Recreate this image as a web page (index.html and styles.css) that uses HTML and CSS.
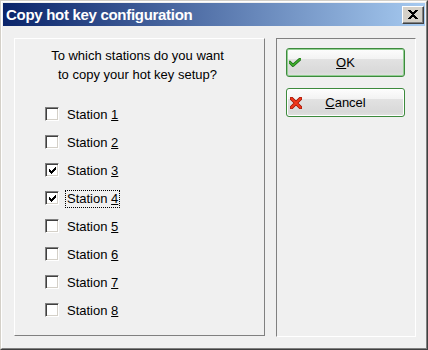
FILE: index.html
```html
<!DOCTYPE html>
<html lang="en">
<head>
  <meta charset="UTF-8">
  <title>Copy hot key configuration</title>
  <link rel="stylesheet" href="styles.css">
</head>
<body>
  <div class="window">
    <div class="frame">
      <div class="titlebar">
        <span class="title">Copy hot key configuration</span>
        <button class="close-btn" aria-label="Close">
          <svg width="10" height="9" viewBox="0 0 10 9" shape-rendering="crispEdges">
            <path d="M0 0h2.6l2.4 2.9L7.4 0H10L6.3 4.5 10 9H7.4L5 6.1 2.6 9H0l3.7-4.5z" fill="#000"/>
          </svg>
        </button>
      </div>

      <div class="content">
        <div class="group group-left">
          <p class="question">To which stations do you want<br>to copy your hot key setup?</p>
          <ul class="station-list" id="station-list"></ul>
        </div>

        <div class="group group-right">
          <button class="dlg-btn default">
            <svg class="btn-icon" width="12" height="9" viewBox="0 0 12 9">
              <path d="M0.8 4.2 L4 7.4 L11.2 1" fill="none" stroke="#1d6a1d" stroke-width="3" stroke-linejoin="round" stroke-linecap="round"/>
              <path d="M0.8 4.2 L4 7.4 L11.2 1" fill="none" stroke="#3fae2a" stroke-width="1.6" stroke-linejoin="round" stroke-linecap="round"/>
            </svg>
            <span><u>O</u>K</span>
          </button>
          <button class="dlg-btn">
            <svg class="btn-icon cross" width="12" height="12" viewBox="0 0 12 12">
              <path d="M1.5 1.5 L10.5 10.5 M10.5 1.5 L1.5 10.5" stroke="#a01000" stroke-width="3.6" stroke-linecap="round"/>
              <path d="M1.5 1.5 L10.5 10.5 M10.5 1.5 L1.5 10.5" stroke="#f0391c" stroke-width="2" stroke-linecap="round"/>
            </svg>
            <span><u>C</u>ancel</span>
          </button>
        </div>
      </div>
    </div>
  </div>

  <script>
    const stations = [
      { num: 1, checked: false },
      { num: 2, checked: false },
      { num: 3, checked: true },
      { num: 4, checked: true, focused: true },
      { num: 5, checked: false },
      { num: 6, checked: false },
      { num: 7, checked: false },
      { num: 8, checked: false }
    ];

    const checkSvg = `
      <svg width="7" height="7" viewBox="0 0 7 7" shape-rendering="crispEdges">
        <path d="M0 2h1v1h1v1h1V3h1V2h1V1h1V0h1v3H6v1H5v1H4v1H3v1H2V6H1V5H0z" fill="#000"/>
      </svg>`;

    function renderStations() {
      const list = document.getElementById("station-list");
      list.innerHTML = "";

      stations.forEach(st => {
        const li = document.createElement("li");
        li.className = "station";
        li.innerHTML = `
          <span class="checkbox">${st.checked ? checkSvg : ""}</span>
          <span class="station-label${st.focused ? " focused" : ""}">Station <u>${st.num}</u></span>
        `;
        li.addEventListener("click", () => {
          st.checked = !st.checked;
          renderStations();
        });
        list.appendChild(li);
      });
    }

    renderStations();
  </script>
</body>
</html>
```

FILE: styles.css
```css
body {
  margin: 0;
  padding: 0;
  background-color: #f0f0f0;
  font-family: "Liberation Sans", Arial, sans-serif;
  font-size: 13px;
  color: #000;
}

.window {
  width: 428px;
  height: 350px;
  box-sizing: border-box;
  border: 1px solid;
  border-color: #d4d0c8 #404040 #404040 #d4d0c8;
}

.frame {
  height: 100%;
  box-sizing: border-box;
  border: 1px solid;
  border-color: #fff #808080 #808080 #fff;
  padding: 1px;
  background-color: #f0f0f0;
}

.titlebar {
  height: 23px;
  display: flex;
  align-items: center;
  justify-content: space-between;
  padding: 0 1px 0 3px;
  background: linear-gradient(to right, #0a246a, #a6caf0);
}

.title {
  color: #fff;
  font-weight: bold;
  font-size: 15px;
  letter-spacing: -0.3px;
}

.close-btn {
  width: 22px;
  height: 18px;
  padding: 0;
  display: flex;
  align-items: center;
  justify-content: center;
  background-color: #d4d0c8;
  border: 1px solid;
  border-color: #fff #404040 #404040 #fff;
  box-shadow: inset -1px -1px #808080;
}

.content {
  display: flex;
  gap: 11px;
  padding: 12px 9px 0 11px;
}

.group {
  box-sizing: border-box;
  border: 1px solid;
}

.group-left {
  width: 251px;
  height: 298px;
  border-color: #fff #808080 #808080 #fff;
  padding: 7px 0 0 30px;
}

.group-right {
  width: 140px;
  height: 299px;
  border-color: #808080 #fff #fff #808080;
  padding: 9px 0 0 9px;
  display: flex;
  flex-direction: column;
  gap: 11px;
}

.question {
  margin: 0 0 0 -30px;
  line-height: 19px;
  text-align: center;
  padding-right: 4px;
}

.station-list {
  list-style: none;
  margin: 22px 0 0 0;
  padding: 0;
  display: flex;
  flex-direction: column;
  gap: 10px;
}

.station {
  display: flex;
  align-items: flex-start;
  gap: 6px;
  height: 18px;
  cursor: default;
}

.checkbox {
  width: 14px;
  height: 14px;
  margin-top: 1px;
  box-sizing: border-box;
  border: 1px solid;
  border-color: #808080 #fff #fff #808080;
  box-shadow: inset 1px 1px #404040, inset -1px -1px #d4d0c8;
  background-color: #fff;
  display: flex;
  align-items: center;
  justify-content: center;
}

.station-label {
  line-height: 16px;
  padding: 0 1px;
  border: 1px dotted transparent;
}

.station-label.focused {
  border-color: #000;
}

.dlg-btn {
  position: relative;
  width: 119px;
  height: 29px;
  padding: 0;
  font-family: inherit;
  font-size: 13px;
  color: #000;
  border: 1px solid #3d8a3d;
  border-radius: 3px;
  background: linear-gradient(#fdfdfd, #f3f3f3 36%, #e2e2e2 38%, #d9d9d9 85%, #e2e2e2);
  box-shadow: inset 0 0 0 1px #fff;
}

.dlg-btn.default {
  box-shadow: inset 0 0 0 1px #93cf93;
}

.btn-icon {
  position: absolute;
  left: 2px;
  top: 9px;
}

.btn-icon.cross {
  left: 3px;
  top: 8px;
}
```
